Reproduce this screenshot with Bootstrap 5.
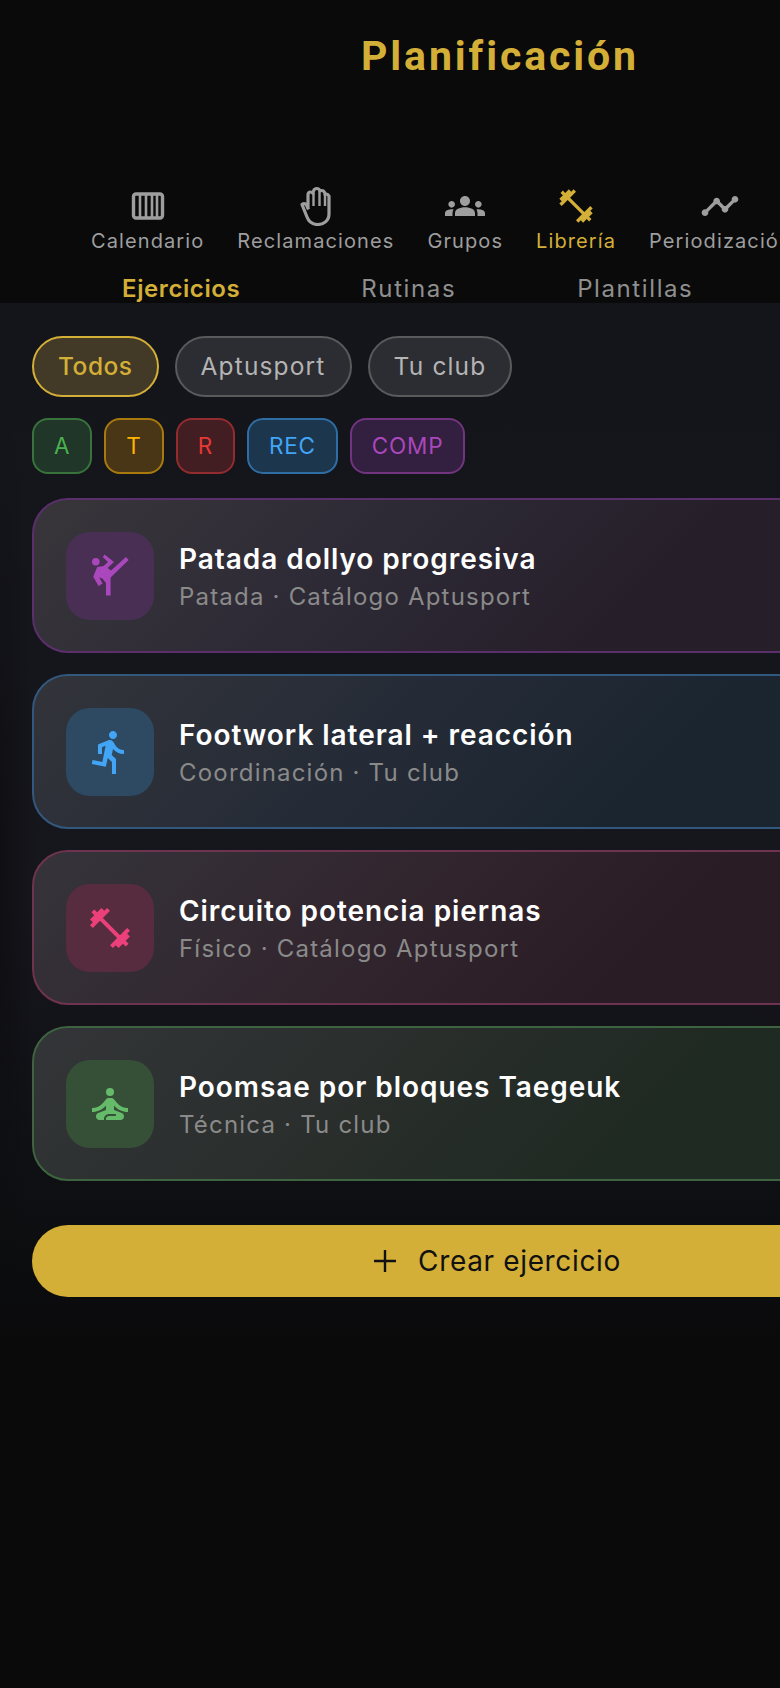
<!DOCTYPE html>
<html lang="es">
<head>
    <meta charset="UTF-8">
    <meta name="viewport" content="width=device-width, initial-scale=1.0">
    <title>Planificación</title>
    <link href="https://cdn.jsdelivr.net/npm/bootstrap@5.3.0/dist/css/bootstrap.min.css" rel="stylesheet">
    <style>
        html, body {
            background: #0a0a0b;
            overflow-x: hidden;
        }

        body {
            width: 780px;
            font-family: Inter, "Noto Sans", sans-serif;
        }

        .app-shell {
            width: 1000px;
            min-height: 1688px;
            background:
                radial-gradient(ellipse 36px 480px at 0 860px, rgba(10, 10, 11, .55), rgba(10, 10, 11, 0)),
                linear-gradient(180deg, #14151b 0, #16161d 600px, #0e0f12 900px, #0a0a0b 1040px) 0 303px no-repeat;
        }

        .top-zone {
            height: 303px;
            background: #0a0a0b;
        }

        .page-title {
            height: 112px;
            margin: 0 0 74px;
            font-family: Roboto, sans-serif;
            font-size: 41px;
            font-weight: 700;
            letter-spacing: 2.9px;
            line-height: 112px;
            text-align: center;
            color: #d4af37;
        }

        .section-row {
            padding-left: 91px;
            gap: 33px;
        }

        .section-item {
            color: #9e9e9e;
            font-size: 20px;
            line-height: 24px;
            letter-spacing: 1.1px;
            white-space: nowrap;
        }

        .section-item svg {
            display: block;
            width: 40px;
            height: 40px;
            margin-bottom: 3px;
            fill: currentColor;
        }

        .section-item.is-on,
        .sub-tab.is-on {
            color: #d4af37;
        }

        .sub-row {
            margin-top: 21px;
            padding-left: 122px;
            gap: 121px;
        }

        .sub-tab {
            color: #8f8f8f;
            font-size: 24px;
            line-height: 29px;
            letter-spacing: 1.6px;
        }

        .sub-tab.is-on {
            font-weight: 600;
            letter-spacing: .6px;
        }

        .body-zone {
            padding: 33px 32px 0;
        }

        .origin-chip {
            height: 61px;
            padding: 0 24px;
            border: 2px solid #5a5a5c;
            border-radius: 31px;
            background: #2c2d32;
            color: #b4b4b4;
            font-size: 24.5px;
            letter-spacing: 1.15px;
        }

        .origin-chip.is-on {
            border-color: #d4af37;
            background: #423a26;
            color: #d4af37;
            font-weight: 500;
            letter-spacing: .5px;
        }

        .level-row {
            margin-top: 21px;
            gap: 12px;
        }

        .level-chip {
            height: 56px;
            padding: 0 20px;
            border: 2px solid;
            border-radius: 16px;
            font-size: 22.5px;
            letter-spacing: .8px;
        }

        .tone-green { color: #4caf50; border-color: #38733b; background: #1f3628; }
        .tone-amber { color: #ffb300; border-color: #a87a0e; background: #493616; }
        .tone-red { color: #e53935; border-color: #922c2e; background: #421d22; }
        .tone-blue { color: #42a5f5; border-color: #2f6ea5; background: #1c364e; }
        .tone-purple { color: #ab47bc; border-color: #70357e; background: #331f3f; }

        .exercise-list {
            margin-top: 24px;
        }

        .exercise-card {
            height: 155px;
            margin-bottom: 21px;
            padding: 0 32px;
            gap: 25px;
            border: 2px solid;
            border-radius: 36px;
        }

        .exercise-purple {
            border-color: #5a2f6c;
            background: linear-gradient(135deg, #38363a 0, #2d2a36 35%, #261f2a 65%);
        }

        .exercise-blue {
            border-color: #33587e;
            background: linear-gradient(135deg, #33343a 0, #262c37 35%, #1b2530 65%);
        }

        .exercise-pink {
            border-color: #6e3350;
            background: linear-gradient(135deg, #35343a 0, #32262f 35%, #2a1c25 65%);
        }

        .exercise-green {
            border-color: #3e6340;
            background: linear-gradient(135deg, #333538 0, #2a2e2c 35%, #1f2a22 65%);
        }

        .exercise-icon {
            flex: 0 0 88px;
            height: 88px;
            border-radius: 24px;
        }

        .exercise-icon svg {
            width: 48px;
            height: 48px;
            fill: currentColor;
        }

        .exercise-purple .exercise-icon { background: #4a2f55; color: #ab47bc; }
        .exercise-blue .exercise-icon { background: #2e4a63; color: #42a5f5; }
        .exercise-pink .exercise-icon { background: #572c3e; color: #ec407a; }
        .exercise-green .exercise-icon { background: #365038; color: #66bb6a; }

        .exercise-copy {
            padding-top: 4px;
        }

        .exercise-name {
            margin: 0;
            color: #fff;
            font-size: 28px;
            font-weight: 600;
            line-height: 37px;
            letter-spacing: .95px;
        }

        .exercise-meta {
            margin: 0;
            color: #8a8a8a;
            font-size: 24px;
            line-height: 37px;
            letter-spacing: 1.2px;
        }

        .create-btn {
            height: 72px;
            margin-top: 44px;
            padding-right: 18px;
            border: 0;
            border-radius: 36px;
            background: #d4af37;
            color: #111;
            font-size: 28px;
            letter-spacing: .65px;
            gap: 21px;
        }

        .create-btn svg {
            width: 24px;
            height: 24px;
        }
    </style>
</head>
<body>
    <div class="app-shell">
        <header class="top-zone">
            <h1 class="page-title">Planificación</h1>

            <div class="d-flex section-row">
                <div class="section-item d-flex flex-column align-items-center">
                    <svg viewBox="0 0 40 40"><rect x="5.500" y="8" width="29" height="24" rx="2.500" fill="none" stroke="currentColor" stroke-width="3.400"/><path d="M12 8v24M18 8v24M24 8v24M29 8v24" stroke="currentColor" stroke-width="2.600"/></svg>
                    <span>Calendario</span>
                </div>
                <div class="section-item d-flex flex-column align-items-center">
                    <svg viewBox="0 0 40 40"><path d="M12 22V9Q12 6 14.500 6Q16.500 6 17 7.500Q17.500 2.500 20.500 2.500Q23.500 2.500 24 5Q25.500 4 27.500 5Q29 6 29 8.500Q31.500 7.500 33 10V28C33 35 27.500 38.500 21.500 38.500C15.500 38.500 12.500 35 11 31L6 18.500Q8.500 16.500 10.500 19L12.500 23.500" fill="none" stroke="currentColor" stroke-width="3.200" stroke-linejoin="round"/><path d="M17.500 7V20M23.500 5V20M29 8V20" fill="none" stroke="currentColor" stroke-width="2.400"/></svg>
                    <span>Reclamaciones</span>
                </div>
                <div class="section-item d-flex flex-column align-items-center">
                    <svg viewBox="0 0 24 24"><path d="M12 12.750c1.630 0 3.070.39 4.240.9 1.080.48 1.760 1.560 1.760 2.730V18H6v-1.610c0-1.180.68-2.260 1.760-2.730 1.170-.52 2.610-.91 4.240-.91zM4 13c1.100 0 2-.9 2-2s-.9-2-2-2-2 .9-2 2 .9 2 2 2zm1.130 1.100c-.37-.06-.74-.1-1.130-.1-.99 0-1.930.21-2.780.58C.48 14.900 0 15.620 0 16.430V18h4.500v-1.610c0-.83.23-1.610.63-2.290zM20 13c1.100 0 2-.9 2-2s-.9-2-2-2-2 .9-2 2 .9 2 2 2zm4 3.430c0-.81-.48-1.530-1.220-1.850-.85-.37-1.790-.58-2.780-.58-.39 0-.76.04-1.130.1.4.68.63 1.460.63 2.290V18H24v-1.570zM12 6c1.660 0 3 1.340 3 3s-1.340 3-3 3-3-1.340-3-3 1.340-3 3-3z"/></svg>
                    <span>Grupos</span>
                </div>
                <div class="section-item is-on d-flex flex-column align-items-center">
                    <svg viewBox="0 0 24 24"><path d="M20.570 14.860L22 13.430 20.570 12 17 15.570 8.430 7 12 3.430 10.570 2 9.140 3.430 7.710 2 5.570 4.140 4.140 2.710 2.710 4.140l1.430 1.430L2 7.710l1.430 1.430L2 10.570 3.430 12 7 8.430 15.570 17 12 20.570 13.430 22l1.430-1.430L16.290 22l2.140-2.140 1.430 1.430 1.430-1.430-1.430-1.430L22 16.290z"/></svg>
                    <span>Librería</span>
                </div>
                <div class="section-item d-flex flex-column align-items-center">
                    <svg viewBox="0 0 24 24"><path d="M23 8c0 1.100-.9 2-2 2-.18 0-.35-.02-.51-.07l-3.560 3.550c.05.16.07.34.07.52 0 1.100-.9 2-2 2s-2-.9-2-2c0-.18.02-.36.07-.52l-2.550-2.550c-.16.05-.34.07-.52.07s-.36-.02-.52-.07l-4.550 4.560c.05.16.07.33.07.51 0 1.100-.9 2-2 2s-2-.9-2-2 .9-2 2-2c.18 0 .35.02.51.07l4.560-4.550C8.020 9.360 8 9.180 8 9c0-1.100.9-2 2-2s2 .9 2 2c0 .18-.02.36-.07.52l2.550 2.550c.16-.05.34-.07.52-.07s.36.02.52.07l3.550-3.560C19.020 8.350 19 8.180 19 8c0-1.100.9-2 2-2s2 .9 2 2z"/></svg>
                    <span>Periodización</span>
                </div>
            </div>

            <div class="d-flex sub-row">
                <span class="sub-tab is-on">Ejercicios</span>
                <span class="sub-tab">Rutinas</span>
                <span class="sub-tab">Plantillas</span>
            </div>
        </header>

        <main class="body-zone">
            <div class="d-flex gap-3">
                <span class="origin-chip is-on d-inline-flex align-items-center">Todos</span>
                <span class="origin-chip d-inline-flex align-items-center">Aptusport</span>
                <span class="origin-chip d-inline-flex align-items-center">Tu club</span>
            </div>

            <div class="d-flex level-row">
                <span class="level-chip tone-green d-inline-flex align-items-center">A</span>
                <span class="level-chip tone-amber d-inline-flex align-items-center">T</span>
                <span class="level-chip tone-red d-inline-flex align-items-center">R</span>
                <span class="level-chip tone-blue d-inline-flex align-items-center">REC</span>
                <span class="level-chip tone-purple d-inline-flex align-items-center">COMP</span>
            </div>

            <div class="exercise-list">
                <article class="exercise-card exercise-purple d-flex align-items-center">
                    <div class="exercise-icon d-flex align-items-center justify-content-center">
                        <svg viewBox="0 0 24 24"><circle cx="4.900" cy="4.900" r="1.900"/><path d="M9.300 1.200L14 5l-3.200 3 1.700 1.300L20 2.500 21.300 4l-9 8.800v9H10v-6.300l-1.800-2.200-1.600-.5 1.700 3-2 1.200-2.700-4.600 2-4.900 3.200-.5L11 5 8.400 2.500z"/></svg>
                    </div>
                    <div class="exercise-copy">
                        <h2 class="exercise-name">Patada dollyo progresiva</h2>
                        <p class="exercise-meta">Patada · Catálogo Aptusport</p>
                    </div>
                </article>
                <article class="exercise-card exercise-blue d-flex align-items-center">
                    <div class="exercise-icon d-flex align-items-center justify-content-center">
                        <svg viewBox="0 0 24 24"><path d="M13.490 5.480c1.100 0 2-.9 2-2s-.9-2-2-2-2 .9-2 2 .9 2 2 2zm-3.600 13.900l1-4.400 2.100 2v6h2v-7.500l-2.100-2 .6-3c1.300 1.500 3.300 2.500 5.500 2.500v-2c-1.900 0-3.500-1-4.300-2.400l-1-1.600c-.4-.6-1-1-1.700-1-.3 0-.5.1-.8.1l-5.200 2.200v4.700h2v-3.400l1.800-.7-1.600 8.100-4.900-1-.4 2 7 1.400z"/></svg>
                    </div>
                    <div class="exercise-copy">
                        <h2 class="exercise-name">Footwork lateral + reacción</h2>
                        <p class="exercise-meta">Coordinación · Tu club</p>
                    </div>
                </article>
                <article class="exercise-card exercise-pink d-flex align-items-center">
                    <div class="exercise-icon d-flex align-items-center justify-content-center">
                        <svg viewBox="0 0 24 24"><path d="M20.570 14.860L22 13.430 20.570 12 17 15.570 8.430 7 12 3.430 10.570 2 9.140 3.430 7.710 2 5.570 4.140 4.140 2.710 2.710 4.140l1.430 1.430L2 7.710l1.430 1.430L2 10.570 3.430 12 7 8.430 15.570 17 12 20.570 13.430 22l1.430-1.430L16.290 22l2.140-2.140 1.430 1.430 1.430-1.430-1.430-1.430L22 16.290z"/></svg>
                    </div>
                    <div class="exercise-copy">
                        <h2 class="exercise-name">Circuito potencia piernas</h2>
                        <p class="exercise-meta">Físico · Catálogo Aptusport</p>
                    </div>
                </article>
                <article class="exercise-card exercise-green d-flex align-items-center">
                    <div class="exercise-icon d-flex align-items-center justify-content-center">
                        <svg viewBox="0 0 24 24"><circle cx="12" cy="6" r="2"/><path d="M21 16v-2c-2.240 0-4.160-.96-5.600-2.680l-1.340-1.600A1.980 1.980 0 0 0 12.530 9h-1.050c-.59 0-1.150.26-1.530.72l-1.340 1.600C7.160 13.040 5.240 14 3 14v2c2.770 0 5.190-1.170 7-3.250V15l-3.880 1.550c-.67.27-1.120.93-1.120 1.660C5 19.200 5.800 20 6.790 20H9v-.5c0-1.380 1.120-2.500 2.500-2.500h3c.28 0 .5.22.5.5s-.22.5-.5.5h-3c-.83 0-1.500.67-1.500 1.500v.5h7.210c.99 0 1.790-.8 1.790-1.790 0-.73-.45-1.390-1.120-1.660L14 15v-2.250c1.810 2.080 4.230 3.250 7 3.250z"/></svg>
                    </div>
                    <div class="exercise-copy">
                        <h2 class="exercise-name">Poomsae por bloques Taegeuk</h2>
                        <p class="exercise-meta">Técnica · Tu club</p>
                    </div>
                </article>
            </div>

            <button type="button" class="btn create-btn w-100 d-flex align-items-center justify-content-center">
                <svg viewBox="0 0 24 24"><path d="M12 1v22M1 12h22" stroke="#111" stroke-width="2.400"/></svg>
                Crear ejercicio
            </button>
        </main>
    </div>

    <script src="https://cdn.jsdelivr.net/npm/bootstrap@5.3.0/dist/js/bootstrap.bundle.min.js"></script>
    <script>
        // chips react like the real filter bar
        document.querySelectorAll(".origin-chip").forEach((chip) => {
            chip.addEventListener("click", () => {
                document.querySelectorAll(".origin-chip").forEach((c) => c.classList.remove("is-on"));
                chip.classList.add("is-on");
            });
        });
    </script>
</body>
</html>
